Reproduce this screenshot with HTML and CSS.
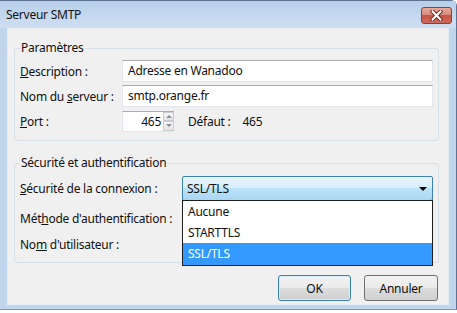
FILE: index.html
```html
<!DOCTYPE html>
<html lang="fr">
<head>
  <meta charset="UTF-8" />
  <title>Serveur SMTP</title>
  <link rel="stylesheet" href="styles.css">
</head>
<body>
  <div class="window">
    <div class="titlebar">
      <span class="title">Serveur SMTP</span>
      <span class="close">
        <svg width="13" height="11" viewBox="0 0 13 11">
          <path d="M2.5 1.5 L10.5 9.5 M10.5 1.5 L2.5 9.5" stroke="#6b2a24" stroke-width="4" stroke-linecap="square"/>
          <path d="M2.5 1.5 L10.5 9.5 M10.5 1.5 L2.5 9.5" stroke="#fff" stroke-width="2" stroke-linecap="square"/>
        </svg>
      </span>
    </div>

    <div class="client">
      <fieldset class="group">
        <legend>Paramètres</legend>
        <div class="row">
          <span class="label"><u>D</u>escription :</span>
          <div class="textbox">Adresse en Wanadoo</div>
        </div>
        <div class="row">
          <span class="label">Nom du <u>s</u>erveur :</span>
          <div class="textbox">smtp.orange.fr</div>
        </div>
        <div class="row">
          <span class="label"><u>P</u>ort :</span>
          <div class="spin">
            <div class="spin-value">465</div>
            <div class="spin-buttons">
              <span class="spin-btn"><i class="tri-up"></i></span>
              <span class="spin-btn"><i class="tri-down"></i></span>
            </div>
          </div>
          <span class="default-label">Défaut :</span>
          <span class="default-value">465</span>
        </div>
      </fieldset>

      <fieldset class="group security">
        <legend>Sécurité et authentification</legend>
        <div class="row row-combo">
          <span class="label"><u>S</u>écurité de la connexion :</span>
          <div class="combo-wrap">
            <div class="combo">
              <span>SSL/TLS</span>
              <i class="tri-down combo-arrow"></i>
            </div>
            <ul class="dropdown">
              <li>Aucune</li>
              <li>STARTTLS</li>
              <li class="selected">SSL/TLS</li>
            </ul>
          </div>
        </div>
        <div class="row row-auth">
          <span class="label">Mét<u>h</u>ode d'authentification :</span>
        </div>
        <div class="row row-user">
          <span class="label">No<u>m</u> d'utilisateur :</span>
        </div>
      </fieldset>

      <div class="buttons">
        <button class="btn btn-default">OK</button>
        <button class="btn">Annuler</button>
      </div>
    </div>
  </div>
</body>
</html>
```

FILE: styles.css
```css
body {
  margin: 0;
  background: #fff;
  font-family: "Noto Sans", "Open Sans", sans-serif;
  font-size: 12px;
  letter-spacing: -0.25px;
  color: #111;
}

.window {
  box-sizing: border-box;
  width: 457px;
  height: 310px;
  padding: 0 7px 4px 7px;
  background: #c1d6ed;
  border-top: 1px solid #5d7391;
  border-right: 1px solid #5d7391;
  border-bottom: 1px solid #6f9fb8;
  border-top-right-radius: 6px;
}

.titlebar {
  height: 27px;
  margin: 0 -7px;
  padding: 0 6px 0 6px;
  display: flex;
  align-items: flex-start;
  justify-content: space-between;
  background: linear-gradient(#b8cfea, #cfdff2);
}

.title {
  margin-top: 6px;
  line-height: 16px;
}

.close {
  box-sizing: border-box;
  width: 31px;
  height: 17px;
  margin-top: 6px;
  margin-right: -2px;
  display: flex;
  align-items: center;
  justify-content: center;
  border: 1px solid #8a4138;
  border-radius: 3px;
  background: linear-gradient(#e8a99b 0%, #d98b7d 45%, #c75445 50%, #cf6a5a 100%);
}

.client {
  box-sizing: border-box;
  height: 277px;
  padding: 12px 9px 0 6px;
  background: #f0f0f0;
  border: 1px solid #e6edf5;
  border-top: none;
}

.group {
  margin: 0;
  padding: 4px 5px 8px 5px;
  border: 1px solid #d5dfe5;
  border-radius: 3px;
  min-inline-size: 0;
}

.group legend {
  padding: 0 1px;
  line-height: 16px;
}

.row {
  display: flex;
  align-items: center;
  height: 22px;
}

.row + .row {
  margin-top: 3px;
}

.label {
  width: 102px;
  flex: none;
}

.textbox {
  box-sizing: border-box;
  flex: 1;
  height: 22px;
  padding: 0 5px;
  line-height: 20px;
  background: #fff;
  border: 1px solid #e2e6ec;
  border-top-color: #abadb3;
}

.spin {
  display: flex;
  height: 21px;
  width: 52px;
}

.spin-value {
  box-sizing: border-box;
  width: 41px;
  padding-right: 2px;
  text-align: right;
  line-height: 19px;
  background: #fff;
  border: 1px solid #e2e6ec;
  border-top-color: #abadb3;
  border-right: none;
}

.spin-buttons {
  display: flex;
  flex-direction: column;
  width: 11px;
  background: #fff;
  border-top: 1px solid #abadb3;
  border-bottom: 1px solid #e2e6ec;
}

.spin-btn {
  box-sizing: border-box;
  flex: 1;
  display: flex;
  align-items: center;
  justify-content: center;
  border: 1px solid #c8ccd2;
  background: linear-gradient(#f6f6f6, #e4e4e4);
}

.tri-up,
.tri-down {
  width: 0;
  height: 0;
  border-left: 3px solid transparent;
  border-right: 3px solid transparent;
}

.tri-up {
  border-bottom: 3px solid #8a8f96;
}

.spin-btn .tri-down {
  border-top: 3px solid #8a8f96;
}

.default-label {
  margin-left: 14px;
}

.default-value {
  margin-left: 12px;
}

.security {
  margin-top: 14px;
  padding: 5px 5px 6px 5px;
}

.security .label {
  width: 162px;
}

.row-combo {
  height: 25px;
}

.security .row-auth {
  margin-top: 5px;
  height: 24px;
}

.security .row-user {
  margin-top: 2px;
  height: 24px;
}

.combo-wrap {
  position: relative;
  flex: 1;
  height: 25px;
}

.combo {
  box-sizing: border-box;
  height: 25px;
  padding: 0 5px 0 4px;
  display: flex;
  align-items: center;
  justify-content: space-between;
  border: 1px solid #3c7fb1;
  border-radius: 2px;
  background: linear-gradient(#e7f4fc 0%, #d8eefb 45%, #bde3f9 50%, #a8d7f4 100%);
}

.combo-arrow {
  border-left-width: 4px;
  border-right-width: 4px;
  border-top: 4px solid #000;
}

.dropdown {
  position: absolute;
  top: 24px;
  left: 0;
  right: 0;
  margin: 0;
  padding: 0;
  list-style: none;
  background: #fff;
  border: 1px solid #1e1e1e;
  z-index: 1;
}

.dropdown li {
  height: 21px;
  padding-left: 5px;
  line-height: 21px;
}

.dropdown li.selected {
  height: 22px;
  line-height: 22px;
  color: #fff;
  background: #3399ff;
}

.buttons {
  display: flex;
  justify-content: flex-end;
  gap: 13px;
  margin-top: 12px;
  margin-right: 1px;
}

.btn {
  box-sizing: border-box;
  width: 74px;
  height: 26px;
  padding: 0;
  font: inherit;
  letter-spacing: inherit;
  color: #111;
  border: 1px solid #707070;
  border-radius: 3px;
  background: linear-gradient(#f2f2f2 0%, #ebebeb 50%, #dddddd 50%, #cfcfcf 100%);
}

.btn-default {
  width: 73px;
  border-color: #3c7fb1;
  box-shadow: inset 0 0 0 1px #d5ecf9;
}
```
